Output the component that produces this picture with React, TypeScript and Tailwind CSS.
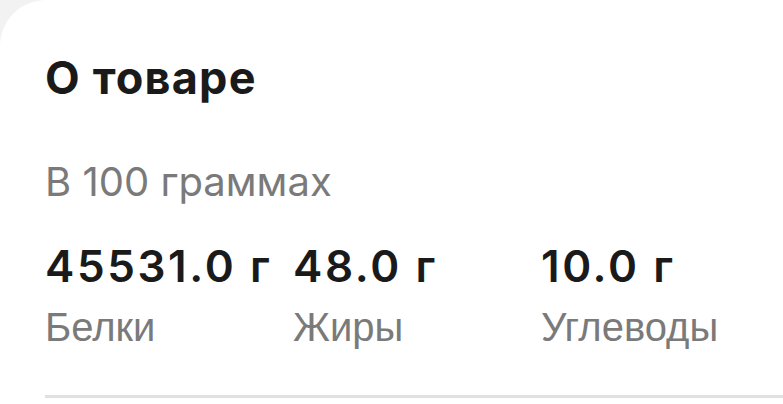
const stats = [
  { value: '45531.0 г', label: 'Белки' },
  { value: '48.0 г', label: 'Жиры' },
  { value: '10.0 г', label: 'Углеводы' },
];

export default function App() {
  return (
    <div className="w-[783px] h-[404px] overflow-hidden bg-[#f2f2f2]">
      <div className="h-full bg-white rounded-tl-[46px] pl-[45px] pt-[52px] font-['Inter',sans-serif]">
        <h2 className="text-[45px] leading-[52px] font-bold text-[#1a1a1a] tracking-[1.2px]">О товаре</h2>
        <p className="mt-[54px] text-[40px] leading-[48px] text-[#7a7a7a]">В 100 граммах</p>
        <div className="mt-[34px] grid grid-cols-[248px_248px_248px]">
          {stats.map((s) => (
            <div key={s.label} className="flex flex-col">
              <span className="text-[44px] leading-[52px] font-semibold text-[#1a1a1a] tracking-[2.6px] whitespace-nowrap">
                {s.value}
              </span>
              <span className="mt-[11px] text-[40px] leading-[48px] text-[#7a7a7a] font-['Liberation_Sans',sans-serif]">
                {s.label}
              </span>
            </div>
          ))}
        </div>
        <div className="mt-[44px] h-[3px] bg-[#e0e0e0]" />
      </div>
    </div>
  );
}
